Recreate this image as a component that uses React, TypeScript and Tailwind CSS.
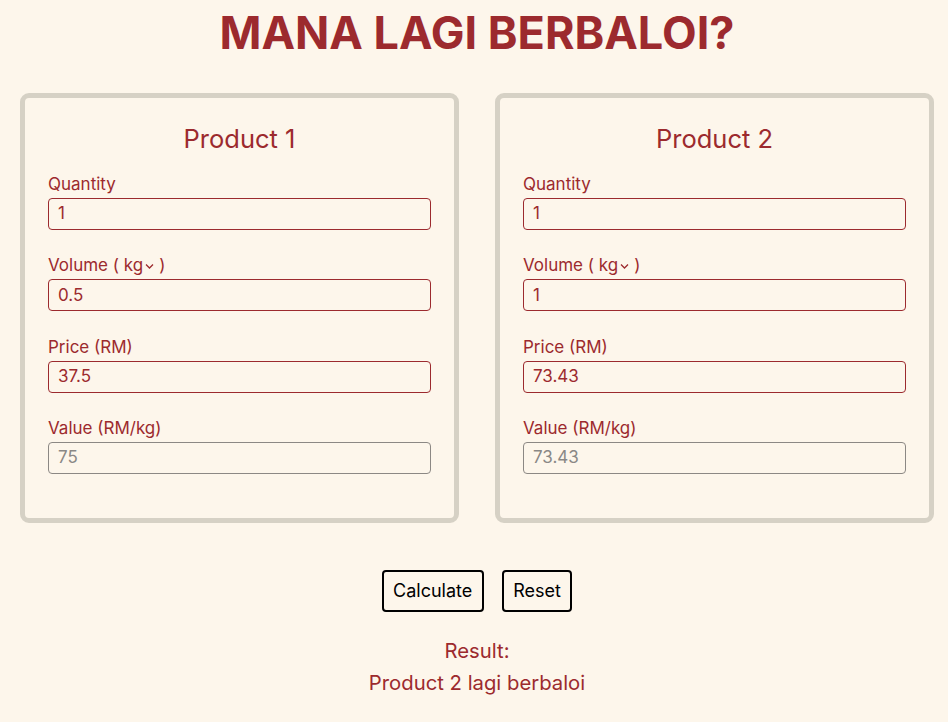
import React from "react";

const RED = "#9c2a2e";

function Field({ label, value, disabled }: { label: React.ReactNode; value: string; disabled?: boolean }) {
  return (
    <div className="flex flex-col">
      <div className="text-[17px] leading-[24px] text-[#9c2a2e] flex items-center">{label}</div>
      <div
        className={
          "mt-[2px] h-[32px] rounded-[4px] border flex items-center px-[9px] text-[17px] " +
          (disabled ? "border-[#8c8884] text-[#8a8886]" : "border-[#9c2a2e] text-[#9c2a2e]")
        }
      >
        {value}
      </div>
    </div>
  );
}

function Card({ title, q, v, p, val }: { title: string; q: string; v: string; p: string; val: string }) {
  return (
    <div className="w-[439px] border-[5px] border-[#d6d1c5] rounded-[9px] px-[23px] pt-[25px] pb-[44px]">
      <div className="text-center text-[25.5px] leading-[32px] text-[#9c2a2e]">{title}</div>
      <div className="mt-[17px] flex flex-col gap-[23.33px]">
        <Field label="Quantity" value={q} />
        <Field
          label={
            <span className="flex items-center">
              Volume (&nbsp;kg
              <svg width="11" height="12" viewBox="0 0 11 12" className="ml-[1px] mr-[4px] mt-[2px]">
                <path d="M2 4.5 L5.5 8 L9 4.5" fill="none" stroke={RED} strokeWidth="1.3" />
              </svg>
              )
            </span>
          }
          value={v}
        />
        <Field label="Price (RM)" value={p} />
        <Field label="Value (RM/kg)" value={val} disabled />
      </div>
    </div>
  );
}

export default function App() {
  return (
    <div
      className="min-h-[722px] w-full bg-[#fdf6eb] flex flex-col items-center pl-[6px]"
      style={{ fontFamily: "Inter, 'Noto Sans', sans-serif" }}
    >
      <h1 className="mt-[9px] text-[45px] leading-[48px] font-bold text-[#9c2a2e]">MANA LAGI BERBALOI?</h1>
      <div className="mt-[36px] w-full flex pl-[14px] gap-[36px]">
        <Card title="Product 1" q="1" v="0.5" p="37.5" val="75" />
        <Card title="Product 2" q="1" v="1" p="73.43" val="73.43" />
      </div>
      <div className="mt-[47px] flex gap-[18px]">
        <button className="h-[42px] px-[9.5px] border-2 border-black rounded-[4px] text-[18px] text-black">Calculate</button>
        <button className="h-[42px] px-[9.5px] border-2 border-black rounded-[4px] text-[18px] text-black">Reset</button>
      </div>
      <div className="mt-[23px] text-center text-[20.3px] leading-[32px] text-[#9c2a2e]">
        <div>Result:</div>
        <div>Product 2 lagi berbaloi</div>
      </div>
    </div>
  );
}
